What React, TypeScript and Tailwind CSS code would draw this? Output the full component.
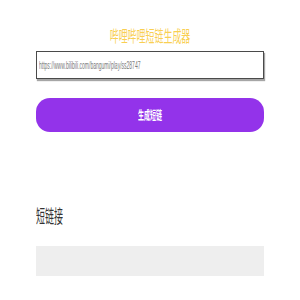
import React, { useState } from "react";

const cjk = "font-['Noto_Sans_CJK_SC','Noto_Sans',sans-serif]";

export default function App() {
  const [url, setUrl] = useState("");

  return (
    <div className={`w-[300px] h-[300px] bg-white ${cjk}`}>
      <div className="w-[228px] mx-auto pt-[25px] flex flex-col">
        <h1 className="text-center text-[16px] leading-[21px] text-[#f9cf52] font-normal">
          <span className="inline-block scale-x-[0.56]">哔哩哔哩短链生成器</span>
        </h1>

        <div className="mt-[5px] h-[28px] border border-[#4a4a4a] shadow-[1px_2px_1px_rgba(0,0,0,0.35)] overflow-hidden flex items-center">
          <input
            className="w-[456px] shrink-0 origin-left scale-x-[0.5] px-[4px] text-[10px] font-['Liberation_Sans',sans-serif] text-[#555] placeholder-[#7a7a7a] outline-none bg-transparent"
            type="text"
            placeholder="https://www.bilibili.com/bangumi/play/ss28747"
            value={url}
            onChange={(e) => setUrl(e.target.value)}
          />
        </div>

        <button
          type="button"
          className="mt-[19px] h-[34px] rounded-[14px] bg-[#9333ea] text-white text-[12px] font-bold flex items-center justify-center"
        >
          <span className="inline-block scale-x-[0.5]">生成短链</span>
        </button>

        <h2 className="mt-[71px] text-[18px] leading-[24px] text-[#333] font-normal">
          <span className="inline-block origin-left scale-x-[0.5]">短链接</span>
        </h2>

        <div className="mt-[19px] h-[30px] bg-[#eeeeee]" />
      </div>
    </div>
  );
}
